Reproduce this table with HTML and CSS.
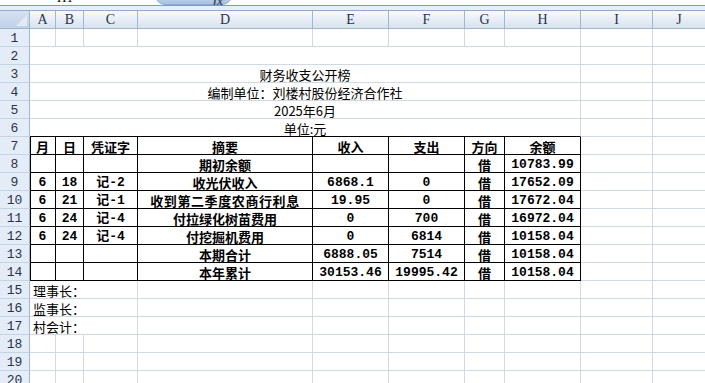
FILE: index.html
```html
<!DOCTYPE html>
<html lang="zh-CN">
<head>
<meta charset="utf-8">
<title>财务收支公开榜</title>
<link rel="stylesheet" href="styles.css">
</head>
<body>
<div class="toolbar">
  <div class="namebox"><span class="namebox-text">H1</span></div>
  <div class="fxbtn"><span class="fx">fx</span></div>
</div>
<div class="gap"></div>
<div class="sheet">
  <div class="corner"><span class="tri"></span></div>
  <div class="ch">A</div><div class="ch">B</div><div class="ch">C</div><div class="ch">D</div><div class="ch">E</div><div class="ch">F</div><div class="ch">G</div><div class="ch">H</div><div class="ch">I</div><div class="ch">J</div>

  <div class="rh">1</div>
  <div class="c"></div><div class="c"></div><div class="c"></div><div class="c"></div><div class="c"></div><div class="c"></div><div class="c"></div><div class="c"></div><div class="c"></div><div class="c"></div>

  <div class="rh">2</div>
  <div class="c span-ah"></div><div class="c"></div><div class="c"></div>

  <div class="rh">3</div>
  <div class="c span-ah center">财务收支公开榜</div><div class="c"></div><div class="c"></div>

  <div class="rh">4</div>
  <div class="c span-ah center">编制单位：刘楼村股份经济合作社</div><div class="c"></div><div class="c"></div>

  <div class="rh">5</div>
  <div class="c span-ah center">2025年6月</div><div class="c"></div><div class="c"></div>

  <div class="rh">6</div>
  <div class="c span-ah center tbl-top">单位:元</div><div class="c"></div><div class="c"></div>

  <div class="rh">7</div>
  <div class="t first">月</div><div class="t">日</div><div class="t">凭证字</div><div class="t">摘要</div><div class="t">收入</div><div class="t">支出</div><div class="t">方向</div><div class="t">余额</div><div class="c"></div><div class="c"></div>

  <div class="rh">8</div>
  <div class="t first"></div><div class="t"></div><div class="t"></div><div class="t">期初余额</div><div class="t"></div><div class="t"></div><div class="t">借</div><div class="t num">10783.99</div><div class="c"></div><div class="c"></div>

  <div class="rh">9</div>
  <div class="t first num">6</div><div class="t num">18</div><div class="t num">记-2</div><div class="t">收光伏收入</div><div class="t num">6868.1</div><div class="t num">0</div><div class="t">借</div><div class="t num">17652.09</div><div class="c"></div><div class="c"></div>

  <div class="rh">10</div>
  <div class="t first num">6</div><div class="t num">21</div><div class="t num">记-1</div><div class="t wide">收到第二季度农商行利息</div><div class="t num">19.95</div><div class="t num">0</div><div class="t">借</div><div class="t num">17672.04</div><div class="c"></div><div class="c"></div>

  <div class="rh">11</div>
  <div class="t first num">6</div><div class="t num">24</div><div class="t num">记-4</div><div class="t">付拉绿化树苗费用</div><div class="t num">0</div><div class="t num">700</div><div class="t">借</div><div class="t num">16972.04</div><div class="c"></div><div class="c"></div>

  <div class="rh">12</div>
  <div class="t first num">6</div><div class="t num">24</div><div class="t num">记-4</div><div class="t">付挖掘机费用</div><div class="t num">0</div><div class="t num">6814</div><div class="t">借</div><div class="t num">10158.04</div><div class="c"></div><div class="c"></div>

  <div class="rh">13</div>
  <div class="t first"></div><div class="t"></div><div class="t"></div><div class="t">本期合计</div><div class="t num">6888.05</div><div class="t num">7514</div><div class="t">借</div><div class="t num">10158.04</div><div class="c"></div><div class="c"></div>

  <div class="rh">14</div>
  <div class="t first"></div><div class="t"></div><div class="t"></div><div class="t">本年累计</div><div class="t num">30153.46</div><div class="t num">19995.42</div><div class="t">借</div><div class="t num">10158.04</div><div class="c"></div><div class="c"></div>

  <div class="rh">15</div>
  <div class="c span-ac left">理事长：</div><div class="c"></div><div class="c"></div><div class="c"></div><div class="c"></div><div class="c"></div><div class="c"></div><div class="c"></div>

  <div class="rh">16</div>
  <div class="c span-ac left">监事长：</div><div class="c"></div><div class="c"></div><div class="c"></div><div class="c"></div><div class="c"></div><div class="c"></div><div class="c"></div>

  <div class="rh">17</div>
  <div class="c span-ac left">村会计：</div><div class="c"></div><div class="c"></div><div class="c"></div><div class="c"></div><div class="c"></div><div class="c"></div><div class="c"></div>

  <div class="rh">18</div>
  <div class="c"></div><div class="c"></div><div class="c"></div><div class="c"></div><div class="c"></div><div class="c"></div><div class="c"></div><div class="c"></div><div class="c"></div><div class="c"></div>

  <div class="rh">19</div>
  <div class="c"></div><div class="c"></div><div class="c"></div><div class="c"></div><div class="c"></div><div class="c"></div><div class="c"></div><div class="c"></div><div class="c"></div><div class="c"></div>

  <div class="rh">20</div>
  <div class="c"></div><div class="c"></div><div class="c"></div><div class="c"></div><div class="c"></div><div class="c"></div><div class="c"></div><div class="c"></div><div class="c"></div><div class="c"></div>
</div>
</body>
</html>
```

FILE: styles.css
```css
html, body {
  margin: 0;
  padding: 0;
  background: #ffffff;
  overflow: hidden;
}
body {
  width: 705px;
  height: 383px;
  font-family: "Noto Sans CJK SC", "Liberation Sans", sans-serif;
  font-size: 13px;
  color: #000;
}

/* formula bar remnant */
.toolbar {
  height: 5px;
  overflow: hidden;
  display: flex;
  background: #ffffff;
}
.namebox {
  width: 130px;
  display: flex;
  justify-content: center;
}
.namebox-text {
  font-family: "Liberation Serif", serif;
  font-size: 13px;
  line-height: 13px;
  margin-top: -9px;
  color: #000;
}
.fxbtn {
  margin-left: 25px;
  width: 77px;
  height: 20px;
  margin-top: -15px;
  border-radius: 0 0 10px 10px;
  background: linear-gradient(#dbe6f4, #a9c1e2);
  border: 1px solid #8eaad0;
  box-sizing: border-box;
  display: flex;
  justify-content: flex-end;
  align-items: flex-end;
  padding: 0 8px 0 0;
}
.fx {
  font-family: "Liberation Serif", serif;
  font-style: italic;
  font-weight: bold;
  font-size: 12px;
  line-height: 12px;
  margin-bottom: -3px;
  color: #3a4a60;
}
.gap {
  height: 4px;
  border-top: 1px solid #7b9ccb;
  border-bottom: 1px solid #8eaad1;
  background: #e6eef8;
}

/* sheet grid */
.sheet {
  display: grid;
  grid-template-columns: 30px 26px 28px 54px 175px 76px 76px 40px 76px 72px 53px;
  grid-template-rows: repeat(21, 18px);
}
.sheet > div {
  box-sizing: border-box;
  line-height: 14px;
  white-space: nowrap;
}
.corner {
  background: linear-gradient(#d6e2f2, #bfd0e8);
  border-right: 1px solid #9eb6ce;
  border-bottom: 1px solid #9eb6ce;
  display: flex;
  align-items: flex-end;
  justify-content: flex-end;
  padding: 0 2px 2px 0;
}
.tri {
  width: 0;
  height: 0;
  border-left: 11px solid transparent;
  border-bottom: 11px solid #e4eaf2;
}
.ch {
  background: linear-gradient(#f8fafd, #e4ebf5 60%, #d9e2ef);
  border-right: 1px solid #9eb6ce;
  border-bottom: 1px solid #9eb6ce;
  text-align: center;
  font-family: "Liberation Serif", serif;
  font-size: 14px;
  color: #27344a;
  padding-top: 2px;
}
.ch:last-child { border-right: 0; }
.rh {
  background: #e4ecf7;
  border-right: 1px solid #9eb6ce;
  border-bottom: 1px solid #c5d3e6;
  text-align: center;
  font-family: "Liberation Mono", monospace;
  font-size: 13px;
  color: #27344a;
  padding-top: 3px;
}
.c {
  border-right: 1px solid #d0d7e5;
  border-bottom: 1px solid #d0d7e5;
}
.span-ah { grid-column: span 8; }
.span-ac { grid-column: span 3; }
.center { text-align: center; padding-top: 3px; }
.left { text-align: left; padding-left: 3px; padding-top: 3px; }
.tbl-top { border-bottom-color: #000; }

.t {
  border-right: 1px solid #000;
  border-bottom: 1px solid #000;
  text-align: center;
  font-weight: bold;
  padding-top: 3px;
}
.t.wide { letter-spacing: 0.6px; }
.t.first { box-shadow: inset 1px 0 0 #000; }
.t.num {
  font-family: "Liberation Mono", "Noto Sans CJK SC", monospace;
  font-size: 13px;
}
```
